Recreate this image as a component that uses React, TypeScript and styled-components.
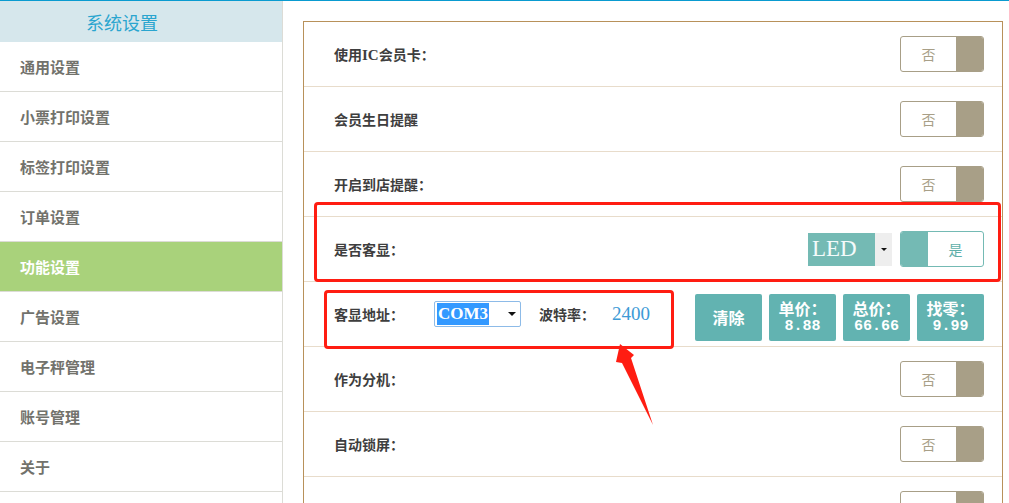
import React from 'react';
import styled, { createGlobalStyle } from 'styled-components';

const GlobalStyle = createGlobalStyle`
  html, body { margin: 0; padding: 0; background: #fff; }
  body { font-family: "Noto Sans CJK SC", "Noto Sans", sans-serif; overflow: hidden; }
  * { box-sizing: border-box; }
`;

const Page = styled.div`
  position: relative;
  width: 1009px;
  height: 503px;
  border-top: 1px solid #0a9bd0;
  display: flex;
  overflow: hidden;
`;

const Sidebar = styled.nav`
  width: 283px;
  flex: none;
  border-right: 1px solid #dcdcd6;
  display: flex;
  flex-direction: column;
`;

const SideHeader = styled.div`
  height: 41px;
  background: #d6e7ec;
  color: #2aa5cf;
  font-size: 18px;
  display: flex;
  align-items: center;
  padding-left: 86px;
`;

const SideItem = styled.div<{ $active?: boolean }>`
  height: 50px;
  flex: none;
  border-bottom: 1px solid #dcdcd6;
  padding-left: 20px;
  display: flex;
  align-items: center;
  font-size: 15px;
  font-weight: 700;
  color: ${(p) => (p.$active ? '#ffffff' : '#72726c')};
  background: ${(p) => (p.$active ? '#a9d27b' : '#ffffff')};
`;

const Main = styled.main`
  flex: 1;
  padding: 20px 6px 0 20px;
  display: flex;
`;

const Panel = styled.section`
  flex: 1;
  border: 1px solid #b8915a;
  border-bottom: none;
  display: flex;
  flex-direction: column;
`;

const Row = styled.div`
  height: 65px;
  flex: none;
  border-bottom: 1px solid #e8dccb;
  display: flex;
  align-items: center;
  padding: 0 18px 0 30px;
`;

const Label = styled.span<{ $w?: number }>`
  font-size: 14px;
  font-weight: 700;
  color: #3e3e3e;
  width: ${(p) => (p.$w ? `${p.$w}px` : 'auto')};
  flex: none;
`;

const Latin = styled.span`
  font-family: "Liberation Serif", serif;
  font-size: 15px;
`;

const Spacer = styled.div`
  flex: 1;
`;

const ToggleBox = styled.div<{ $on?: boolean }>`
  width: 84px;
  height: 36px;
  border: 1px solid ${(p) => (p.$on ? '#74bab4' : '#a89f87')};
  border-radius: 3px;
  display: flex;
  flex-direction: ${(p) => (p.$on ? 'row-reverse' : 'row')};
  overflow: hidden;
  background: #fff;
`;

const ToggleText = styled.span<{ $on?: boolean }>`
  flex: 1;
  display: flex;
  align-items: center;
  justify-content: center;
  font-size: 14px;
  color: ${(p) => (p.$on ? '#5fb0aa' : '#a89f87')};
`;

const Knob = styled.span<{ $on?: boolean }>`
  width: 27px;
  flex: none;
  background: ${(p) => (p.$on ? '#74bab4' : '#a89f87')};
`;

const Toggle = ({ on, label = true }: { on?: boolean; label?: boolean }) => (
  <ToggleBox $on={on}>
    <ToggleText $on={on}>{label ? (on ? '是' : '否') : ''}</ToggleText>
    <Knob $on={on} />
  </ToggleBox>
);

const LedSelect = styled.div`
  width: 84px;
  height: 33px;
  display: flex;
  margin-right: 8px;
`;

const LedValue = styled.span`
  flex: 1;
  background: #74bab4;
  color: #f4fbfb;
  font-family: "Liberation Serif", serif;
  font-size: 23px;
  display: flex;
  align-items: center;
  padding-left: 4px;
`;

const LedArrow = styled.span`
  width: 17px;
  background: #eeeeee;
  display: flex;
  align-items: center;
  justify-content: center;
  &::after {
    content: '';
    border-left: 3px solid transparent;
    border-right: 3px solid transparent;
    border-top: 3px solid #111;
  }
`;

const ComSelect = styled.div`
  width: 87px;
  height: 26px;
  border: 1px solid #8dbbe8;
  border-radius: 2px;
  display: flex;
  align-items: center;
  padding-left: 2px;
  padding-right: 4px;
`;

const ComValue = styled.span`
  background: #3399ff;
  color: #fff;
  font-family: "Liberation Serif", serif;
  font-weight: 700;
  font-size: 17px;
  line-height: 22px;
  padding: 0 1px;
`;

const ComArrow = styled.span`
  margin-left: auto;
  border-left: 4px solid transparent;
  border-right: 4px solid transparent;
  border-top: 4px solid #111;
`;

const BaudLabel = styled(Label)`
  margin-left: 18px;
  width: 73px;
`;

const BaudValue = styled.span`
  font-family: "Liberation Serif", serif;
  font-size: 19px;
  color: #3d9ad6;
`;

const ButtonGroup = styled.div`
  margin-left: auto;
  margin-top: 6px;
  display: flex;
  gap: 7px;
`;

const DisplayButton = styled.div`
  width: 67px;
  height: 47px;
  background: #62b3b1;
  border-radius: 2px;
  color: #fff;
  font-weight: 700;
  display: flex;
  flex-direction: column;
  align-items: center;
  justify-content: center;
  gap: 4px;
  font-size: 16px;
`;

const ButtonTitle = styled.span`
  font-size: 16px;
  line-height: 16px;
  height: 16px;
  display: block;
  overflow: visible;
  margin-top: -2px;
`;

const Amount = styled.span`
  font-family: "Liberation Mono", monospace;
  font-size: 15px;
  font-weight: 700;
  line-height: 13px;
  display: block;
`;

const Highlight = styled.div<{ $l: number; $t: number; $w: number; $h: number }>`
  position: absolute;
  left: ${(p) => p.$l}px;
  top: ${(p) => p.$t}px;
  width: ${(p) => p.$w}px;
  height: ${(p) => p.$h}px;
  border: 3px solid #ff1d12;
  border-radius: 4px;
  pointer-events: none;
`;

const ArrowSvg = styled.svg`
  position: absolute;
  left: 600px;
  top: 335px;
  pointer-events: none;
`;

const menu = ['通用设置', '小票打印设置', '标签打印设置', '订单设置', '功能设置', '广告设置', '电子秤管理', '账号管理', '关于'];

export default function App() {
  return (
    <>
      <GlobalStyle />
      <Page>
        <Sidebar>
          <SideHeader>系统设置</SideHeader>
          {menu.map((m) => (
            <SideItem key={m} $active={m === '功能设置'}>{m}</SideItem>
          ))}
        </Sidebar>
        <Main>
          <Panel>
            <Row>
              <Label>使用<Latin>IC</Latin>会员卡：</Label>
              <Spacer />
              <Toggle />
            </Row>
            <Row>
              <Label>会员生日提醒</Label>
              <Spacer />
              <Toggle />
            </Row>
            <Row>
              <Label>开启到店提醒：</Label>
              <Spacer />
              <Toggle />
            </Row>
            <Row>
              <Label>是否客显：</Label>
              <Spacer />
              <LedSelect>
                <LedValue>LED</LedValue>
                <LedArrow />
              </LedSelect>
              <Toggle on />
            </Row>
            <Row>
              <Label $w={100}>客显地址：</Label>
              <ComSelect>
                <ComValue>COM3</ComValue>
                <ComArrow />
              </ComSelect>
              <BaudLabel>波特率：</BaudLabel>
              <BaudValue>2400</BaudValue>
              <ButtonGroup>
                <DisplayButton>清除</DisplayButton>
                <DisplayButton><ButtonTitle>单价：</ButtonTitle><Amount>8.88</Amount></DisplayButton>
                <DisplayButton><ButtonTitle>总价：</ButtonTitle><Amount>66.66</Amount></DisplayButton>
                <DisplayButton><ButtonTitle>找零：</ButtonTitle><Amount>9.99</Amount></DisplayButton>
              </ButtonGroup>
            </Row>
            <Row>
              <Label>作为分机：</Label>
              <Spacer />
              <Toggle />
            </Row>
            <Row>
              <Label>自动锁屏：</Label>
              <Spacer />
              <Toggle />
            </Row>
            <Row>
              <Spacer />
              <Toggle label={false} />
            </Row>
          </Panel>
        </Main>
        <Highlight $l={314} $t={201} $w={687} $h={80} />
        <Highlight $l={324} $t={289} $w={350} $h={59} />
        <ArrowSvg width="70" height="100" viewBox="0 0 70 100">
          <polygon points="20,8 34,19 31,22 53,89 22,27 16,26" fill="#ff1d12" />
        </ArrowSvg>
      </Page>
    </>
  );
}
